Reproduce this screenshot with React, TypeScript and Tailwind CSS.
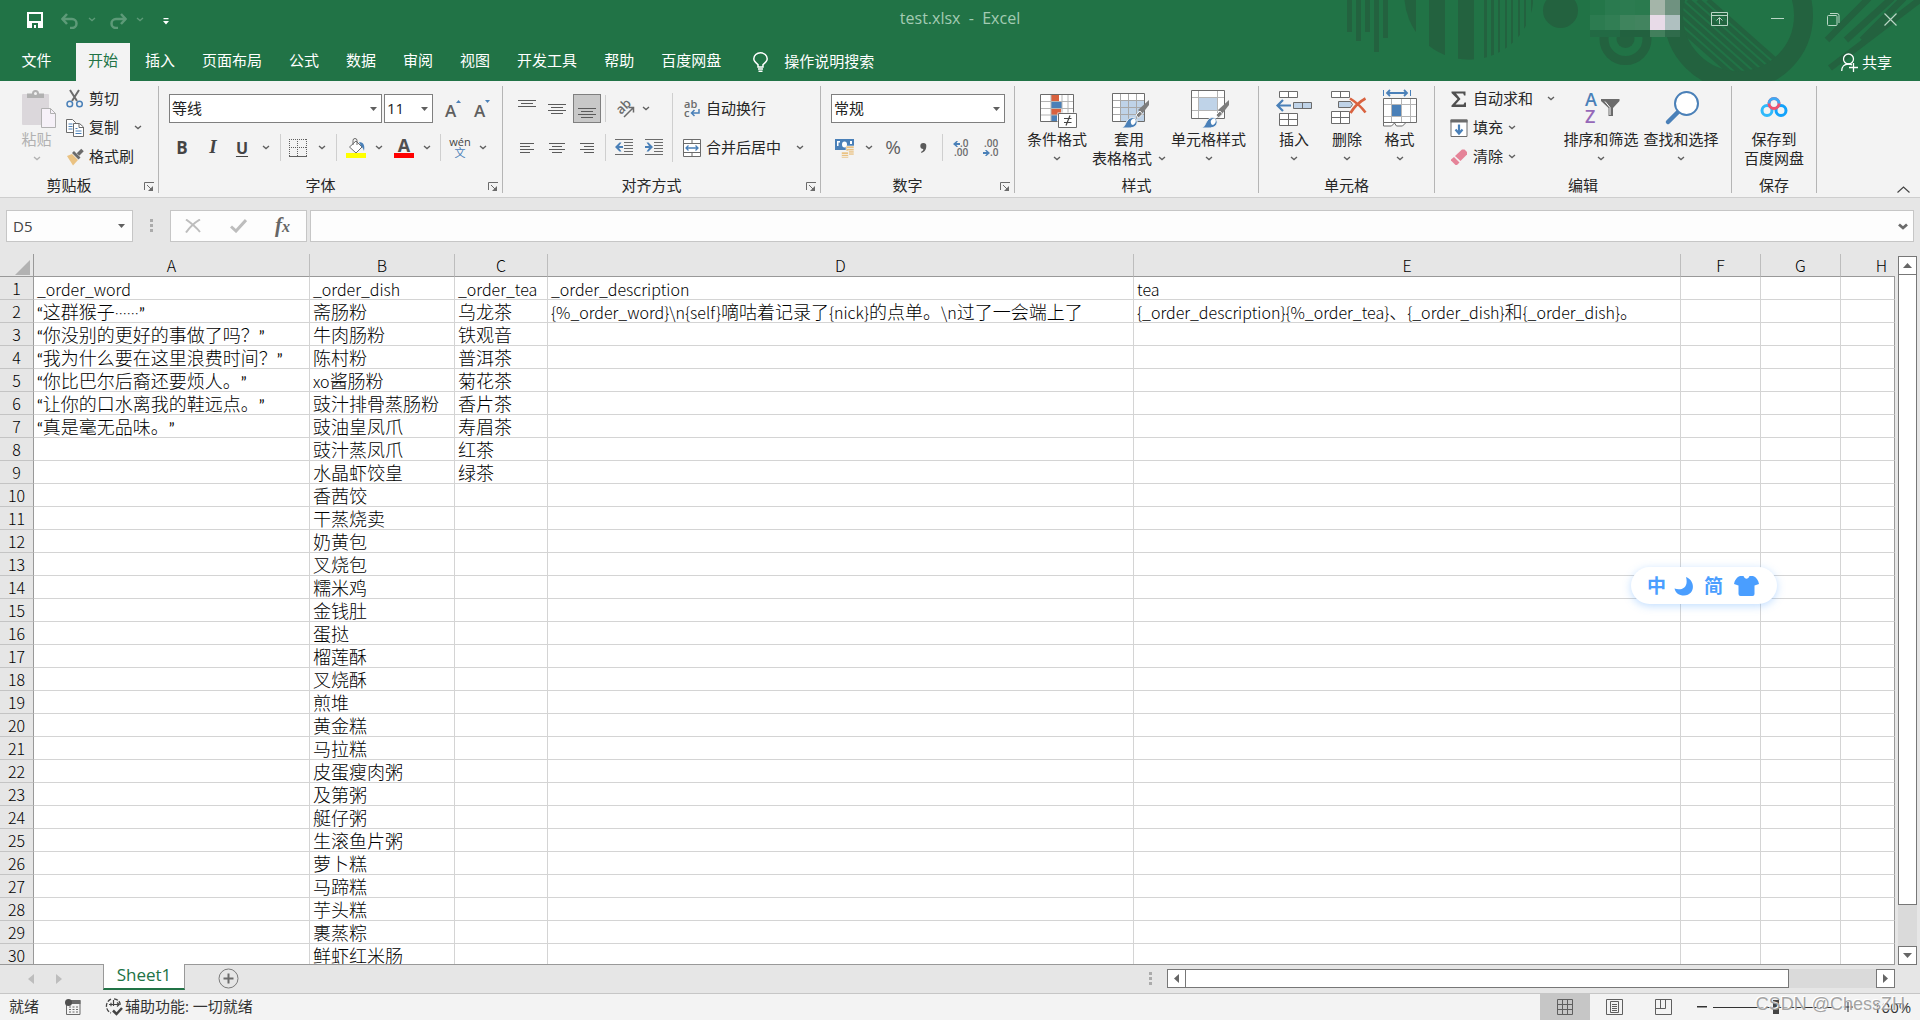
import React from "react";

type Kids = { children?: React.ReactNode };

const G = "#6b6b6b";
const B = "#4a80b8";

/* ---------- small shared pieces ---------- */

function Chev({ className = "" }: { className?: string }) {
  return (
    <svg className={"shrink-0 " + className} width="8" height="5" viewBox="0 0 8 5" fill="none" aria-hidden="true">
      <path d="M1 1l3 2.6L7 1" stroke="currentColor" strokeWidth="1.3" />
    </svg>
  );
}

function Tri({ className = "" }: { className?: string }) {
  return (
    <svg className={className} width="7" height="4" viewBox="0 0 7 4" aria-hidden="true">
      <path d="M0 0h7L3.5 4z" fill="#5f5f5f" />
    </svg>
  );
}

function Tool({ label, className = "", children }: Kids & { label: string; className?: string }) {
  return (
    <button type="button" aria-label={label} className={"flex h-[29px] shrink-0 items-center justify-center text-[#5f5f5f] " + className}>
      {children}
    </button>
  );
}

function Line({ className = "" }: { className?: string }) {
  return <div className={"h-[27px] w-px shrink-0 bg-[#cfcfcf] " + className} />;
}

function Group({ label, className, launcher, children }: Kids & { label: string; className: string; launcher?: boolean }) {
  return (
    <>
      <section aria-label={label} className={"flex shrink-0 flex-col " + className}>
        <div className="flex h-24">{children}</div>
        <div className={"relative flex h-3 items-center justify-center pb-0.5 text-[15px] leading-5 " + (launcher ? "pr-5" : "")}>
          <span>{label}</span>
          {launcher && (
            <button type="button" aria-label={label + "设置"} className="absolute right-1 top-0.5">
              <svg width="10" height="10" viewBox="0 0 10 10" fill="none">
                <path d="M.5 8V.5H10M3 3l5 5" stroke={G} />
                <path d="M9 4v5H4z" fill={G} />
              </svg>
            </button>
          )}
        </div>
      </section>
      <div className="mt-0.5 w-px shrink-0 bg-[#b5b5b5]" />
    </>
  );
}

function Big({ className, icon, label, second, noChev }: { className: string; icon: React.ReactNode; label: string; second?: string; noChev?: boolean }) {
  return (
    <button type="button" className={"flex shrink-0 flex-col items-center whitespace-nowrap pt-[5px] text-[15px] leading-[19px] " + className}>
      <svg className="shrink-0 overflow-visible" width="40" height="40" viewBox="0 0 40 40" fill="none" aria-hidden="true">
        {icon}
      </svg>
      <span className="mt-px">{label}</span>
      <span className="flex h-[19px] items-center gap-1.5">
        {second}
        {!noChev && <Chev className="text-[#5f5f5f]" />}
      </span>
    </button>
  );
}

function Small({ icon, label, chev, gap = "" }: { icon: React.ReactNode; label: string; chev?: boolean; gap?: string }) {
  return (
    <button type="button" className="flex h-[29px] items-center whitespace-nowrap text-[15px]">
      <svg className="mr-[5px] shrink-0 overflow-visible" width="18" height="18" viewBox="0 0 18 18" fill="none" aria-hidden="true">
        {icon}
      </svg>
      {label}
      {chev && <Chev className={"text-[#5f5f5f] " + gap} />}
    </button>
  );
}

function Combo({ label, value, className }: { label: string; value: string; className: string }) {
  return (
    <div className={"relative shrink-0 " + className}>
      <select aria-label={label} defaultValue={value} className="h-[29px] w-full appearance-none border border-[#7f7f7f] bg-white pl-[2px] text-[15px] leading-none text-[#222]">
        <option>{value}</option>
      </select>
      <Tri className="pointer-events-none absolute right-[5px] top-[13px]" />
    </div>
  );
}

function Lines({ rows, align = "center", wide = 18, narrow = 12, top = 0 }: { rows: number; align?: "left" | "center" | "right"; wide?: number; narrow?: number; top?: number }) {
  return (
    <svg width="18" height="18" viewBox="0 0 18 18" aria-hidden="true">
      {Array.from({ length: rows }, (_, i) => {
        const w = i % 2 ? narrow : wide;
        const x = align === "left" ? 2 : align === "right" ? 16 - w : (18 - w) / 2;
        return <rect key={i} x={x} y={top + i * 3} width={w} height="1" fill="#5a5a5a" />;
      })}
    </svg>
  );
}

const brush = (
  <>
    <path d="M40 11v5l-7 9-4-4z" fill="#7d7d7d" />
    <path d="M31 22l-4 4 2.500 3 4-4z" fill="#7d7d7d" stroke="#f3f3f3" />
    <path d="M12 39c4-1 4-4 6-7 3-5 9-4 10 0 1 5-4 7-8 7z" fill={B} stroke="#f3f3f3" />
    <path d="M22 34c-1-3 2-5 4-4 2 2 0 5-2 6-1 0-2-1-2-2z" fill="#fff" />
  </>
);

/* ---------- title bar ---------- */

const mosaic = [
  ["#247649", "#2a7a4f", "#2c7b50", "#2a7a4e", "#a4b5a9", "#6f9280"],
  ["#2c7b50", "#317e54", "#3f845d", "#42845f", "#e8dbe8", "#afc0c0"],
  ["#226a44", "#226a44", "#22613f", "#22613f", "#427f5c", "#2f6b4b"],
];

function Decor() {
  const bars = [[47, 32], [56, 41], [65, 32], [74, 52], [83, 38]];
  const slices = [[104, 12], [129, 16], [158, 16], [184, 3], [191, 3], [198, 2], [205, 2], [211, 2], [218, 2], [224, 2], [231, 2]];
  return (
    <svg className="pointer-events-none absolute right-0 top-0" width="620" height="81" viewBox="0 0 620 81" fill="#23623f" aria-hidden="true">
      <defs>
        <clipPath id="disc"><circle cx="169" cy="-5" r="64.700" /></clipPath>
        <clipPath id="hole"><circle cx="438.500" cy="15.500" r="56" /></clipPath>
      </defs>
      {bars.map(([x, h]) => <rect key={x} x={x} width="5" height={h} />)}
      <g clipPath="url(#disc)">{slices.map(([x, w]) => <rect key={x} x={x} width={w} height="62" />)}</g>
      <circle cx="260.500" cy="10.500" r="17.500" />
      <circle cx="325.500" cy="39" r="21.500" fill="none" stroke="#23623f" strokeWidth="9" />
      <circle cx="325.500" cy="39" r="9" />
      <circle cx="438.500" cy="15.500" r="65" fill="none" stroke="#23623f" strokeWidth="19" />
      <g clipPath="url(#hole)" stroke="#23623f" strokeWidth="4.500">
        {[-4, 6, 16, 26, 36, 46, 56].map((d) => <path key={d} d={`M${352 + d} 0l86 76`} />)}
      </g>
      <g stroke="#23623f" strokeWidth="6.500">
        <path d="M569-2l-42 42M592-2l-46 42M604-2l-42 42M622-2l-92 70" />
      </g>
    </svg>
  );
}

function TitleBar() {
  return (
    <div className="relative flex h-[43px] items-center text-white">
      <button type="button" aria-label="保存" className="ml-[27px] -mt-1">
        <svg width="16" height="16" viewBox="0 0 16 16" fill="none">
          <path d="M1 1h14v14H1z" stroke="#fff" strokeWidth="2" />
          <path d="M1 9h14v6H1z" fill="#fff" />
          <path d="M5 11h6v5H9v-3H7v3H5z" fill="#217346" />
        </svg>
      </button>
      <button type="button" aria-label="撤消" className="ml-[18px] -mt-0.5 text-[#5d9a78]">
        <svg width="18" height="16" viewBox="0 0 18 16" fill="none">
          <path d="M1 6h10a4.300 4.300 0 010 9H9" stroke="currentColor" strokeWidth="2.500" />
          <path d="M6 1L1.500 6 6 11" stroke="currentColor" strokeWidth="2.500" />
        </svg>
      </button>
      <Chev className="-mt-1 ml-[9px] text-[#5d9a78]" />
      <button type="button" aria-label="恢复" className="-mt-0.5 ml-[13px] text-[#5d9a78]">
        <svg width="18" height="16" viewBox="0 0 18 16" fill="none">
          <path d="M17 6H7a4.300 4.300 0 000 9h2" stroke="currentColor" strokeWidth="2.500" />
          <path d="M12 1l4.500 5L12 11" stroke="currentColor" strokeWidth="2.500" />
        </svg>
      </button>
      <Chev className="-mt-1 ml-[9px] text-[#5d9a78]" />
      <button type="button" aria-label="自定义快速访问工具栏" className="ml-[19px]">
        <svg width="6" height="7" viewBox="0 0 6 7" fill="#fff"><path d="M.5 0h5v1.200h-5zM0 3h6L3 6.500z" /></svg>
      </button>
      <h1 className="pointer-events-none absolute inset-x-0 top-2 whitespace-pre text-center text-[16px] leading-5 text-[#a3cbb3]">test.xlsx  -  Excel</h1>
      <div className="ml-auto flex h-full text-[#b9d6c5]">
        <div className="mr-[31px] grid h-[37px] grid-cols-[repeat(6,15px)] grid-rows-[15px_15px_7px]">
          {mosaic.flat().map((c, i) => <div key={i} style={{ background: c }} />)}
        </div>
        <button type="button" aria-label="功能区显示选项" className="flex h-[38px] w-[18px] items-center">
          <svg width="17" height="14" viewBox="0 0 17 14" fill="none" stroke="currentColor"><path d="M.5.5h16v13H.5zM.5 3.500h16M8.500 12V6M5.500 8.500l3-3 3 3" /></svg>
        </button>
        <button type="button" aria-label="最小化" className="ml-[42px] flex h-[36px] w-[13px] items-center">
          <svg width="13" height="1" viewBox="0 0 13 1"><path d="M0 0h13v1H0z" fill="currentColor" /></svg>
        </button>
        <button type="button" aria-label="还原" className="ml-[43px] flex h-[38px] w-[14px] items-center">
          <svg width="13" height="13" viewBox="0 0 13 13" fill="none" stroke="currentColor"><rect x=".5" y="2.500" width="9.500" height="10" rx="1" /><path d="M3 .5h7a2 2 0 012 2V10" /></svg>
        </button>
        <button type="button" aria-label="关闭" className="ml-[43px] mr-[23px] flex h-[38px] w-[13px] items-center">
          <svg width="13" height="13" viewBox="0 0 13 13" fill="none" stroke="currentColor" strokeWidth="1.200"><path d="M.5.5l12 12M12.500.5l-12 12" /></svg>
        </button>
      </div>
    </div>
  );
}

function TabBar() {
  const tabs = ["插入", "页面布局", "公式", "数据", "审阅", "视图", "开发工具", "帮助", "百度网盘"];
  return (
    <div className="relative flex h-[38px] items-stretch text-[15px] text-white">
      <button type="button" className="w-[76px] pb-[3px] pr-[3px]">文件</button>
      <button type="button" className="mr-[2px] bg-[#f3f3f3] px-[12px] pb-[3px] text-[#217346]">开始</button>
      {tabs.map((t) => <button type="button" key={t} className="mr-px px-[13px] pb-[3px]">{t}</button>)}
      <button type="button" className="ml-[18px] flex items-center gap-4">
        <svg width="15" height="20" viewBox="0 0 15 20" fill="none" stroke="#fff" strokeWidth="1.500"><path d="M5 15v-2.500C3 11 .8 9.500.8 6.800a6.700 6 0 0113.400 0c0 2.700-2.200 4.200-4.200 5.700V15zM5 17h5M5.500 19.200h4" /></svg>
        <span className="pb-[2px]">操作说明搜索</span>
      </button>
      <button type="button" className="ml-auto mr-[28px] flex items-center gap-1">
        <svg width="17" height="19" viewBox="0 0 17 19" fill="none" stroke="#fff" strokeWidth="1.300"><circle cx="7.500" cy="6" r="5" /><path d="M.7 18c0-4 2.500-7 6.800-7 1.500 0 2.500.3 3.500 1M8 14.500h9M12.500 10v9" /></svg>
        共享
      </button>
    </div>
  );
}

/* ---------- ribbon ---------- */

function Ribbon() {
  return (
    <div className="relative flex h-[117px] shrink-0 items-stretch border-b border-[#cecece] bg-[#f3f3f3] pb-1 pt-[3px] text-[#262626]">
      <Group label="剪贴板" className="w-[158px]" launcher>
        <button type="button" className="ml-[15px] flex w-[43px] flex-col items-center whitespace-nowrap pt-[5px] text-[15px] leading-[19px] text-[#b1b1b1]">
          <svg className="ml-[5px] shrink-0" width="36" height="40" viewBox="0 0 36 40" fill="none" aria-hidden="true">
            <rect x="1" y="5" width="27" height="31" rx="1" fill="#dbd7db" />
            <path d="M6 9V4.500h5a3.500 3.500 0 017 0h5V9z" fill="#b1b1b1" />
            <circle cx="14.500" cy="4.500" r="1.500" fill="#f3f3f3" />
            <path d="M20.500 19.500h9l5 5v14h-14z" fill="#f6f1f8" stroke="#b1b1b1" />
            <path d="M29.500 19.500v5h5" stroke="#b1b1b1" />
          </svg>
          <span className="mt-px">粘贴</span>
          <span className="flex h-[19px] items-center"><Chev /></span>
        </button>
        <div className="ml-[8px] flex flex-col items-start">
          <Small label="剪切" icon={<><path d="M4 0l7 11M13 0L6 11" stroke="#6b6b6b" strokeWidth="2" /><circle cx="3.800" cy="14" r="2.800" stroke={B} strokeWidth="1.500" /><circle cx="13.500" cy="14" r="2.800" stroke={B} strokeWidth="1.500" /></>} />
          <Small label="复制" chev gap="ml-[15px]" icon={<><path d="M.5.500h6l3 3v10h-9z" fill="#fff" stroke={G} /><path d="M2.500 5h4M2.500 7.500h4M2.500 10h4" stroke={B} /><path d="M7.500 4.500h6l4 3.500v9.500h-10z" fill="#fff" stroke={G} /><path d="M13 5v3.500h4" stroke={G} /><path d="M9.500 9.500h2M9.500 12h6M9.500 14.500h6" stroke={B} /></>} />
          <Small label="格式刷" icon={<><path d="M1 8l5-2 6 6-5 5.500z" fill="#eac282" /><path d="M6 5l2-2 6.500 6.500-2 2z" fill="#6b6b6b" /><path d="M12 6.500l4.500-4.500" stroke="#6b6b6b" strokeWidth="3.500" /></>} />
        </div>
      </Group>

      <Group label="字体" className="w-[343px]" launcher>
        <div className="flex flex-col pl-[10px] pt-[10px]">
          <div className="flex">
            <Combo label="字体" value="等线" className="w-[213px]" />
            <Combo label="字号" value="11" className="ml-[2px] w-[49px]" />
            <Tool label="增大字号" className="ml-[9px] w-[22px]">
              <span className="mt-1 text-[17px] font-semibold leading-6">A</span>
              <svg className="mb-3.5 shrink-0" width="5" height="3" viewBox="0 0 5 3"><path d="M2.500 0L5 3H0z" fill={B} /></svg>
            </Tool>
            <Tool label="减小字号" className="ml-[7px] w-[22px]">
              <span className="mt-1 text-[17px] font-semibold leading-6">A</span>
              <svg className="mb-3.5 shrink-0" width="5" height="3" viewBox="0 0 5 3"><path d="M2.500 3L5 0H0z" fill={B} /></svg>
            </Tool>
          </div>
          <div className="-ml-[2px] mt-[10px] flex items-center">
            <Tool label="加粗" className="w-[30px] text-[17px] font-bold text-[#444]">B</Tool>
            <Tool label="倾斜" className="w-[32px] font-['Liberation_Serif',serif] text-[19px] font-bold italic text-[#444]">I</Tool>
            <Tool label="下划线" className="w-[26px] text-[16px] font-bold text-[#444] underline underline-offset-2">U</Tool>
            <Tool label="下划线样式" className="w-[22px]"><Chev /></Tool>
            <Line className="ml-[3px] mr-[3px]" />
            <Tool label="边框" className="w-[28px]">
              <svg width="18" height="18" viewBox="0 0 18 18" fill="none" stroke="#5f5f5f"><path d="M.5 0v17M8.500 0v17M17.500 0v17M0 .5h18M0 8.500h18" strokeDasharray="1 1" /><path d="M0 17.500h18" /></svg>
            </Tool>
            <Tool label="边框样式" className="w-[20px]"><Chev /></Tool>
            <Line className="ml-[4px] mr-[4px]" />
            <Tool label="填充颜色" className="w-[30px]">
              <svg width="20" height="20" viewBox="0 0 20 20" fill="none"><path d="M3.500 9L10 3l6 6-6 6z" fill="#fff" stroke={G} /><path d="M7 7V2.500a2 2 0 014 0V7" stroke={G} /><path d="M13 4c5 0 6 4 5 9-1-3-2-4-3-5z" fill={B} /><rect y="15" width="20" height="5" fill="#ff0" /></svg>
            </Tool>
            <Tool label="填充颜色选项" className="w-[16px]"><Chev /></Tool>
            <Tool label="字体颜色" className="ml-[2px] w-[30px] flex-col">
              <span className="mt-px text-[18px] font-bold leading-[15px] text-[#505050]">A</span>
              <span className="h-[5px] w-5 bg-[#f00]" />
            </Tool>
            <Tool label="字体颜色选项" className="w-[16px]"><Chev /></Tool>
            <Line className="ml-[5px] mr-[6px]" />
            <Tool label="拼音" className="w-[26px] flex-col">
              <span className="text-[11px] leading-[10px] text-[#444]">wén</span>
              <span className="text-[11px] leading-[12px] text-[#4a80b8]">文</span>
            </Tool>
            <Tool label="拼音选项" className="w-[20px]"><Chev /></Tool>
          </div>
        </div>
      </Group>

      <Group label="对齐方式" className="w-[317px]" launcher>
        <div className="flex flex-col pl-[10px] pt-[10px]">
          <div className="flex items-center">
            <Tool label="顶端对齐" className="w-[28px]"><Lines rows={3} /></Tool>
            <Tool label="垂直居中" className="ml-[2px] w-[28px]"><Lines rows={4} top={4} /></Tool>
            <Tool label="底端对齐" className="ml-[2px] w-[28px] border border-[#7f7f7f] bg-[#c8c8c8]"><Lines rows={4} top={8} /></Tool>
            <Line className="ml-[4px]" />
            <Tool label="方向" className="ml-[6px] w-[26px]">
              <svg className="overflow-visible" width="22" height="20" viewBox="0 0 22 20" fill="none"><text fontSize="13" fontWeight="600" fill={G} transform="translate(7 16) rotate(-45)">ab</text><path d="M10 18L19 9M14.500 8.500h5v5" stroke={G} strokeWidth="1.500" /></svg>
            </Tool>
            <Tool label="方向选项" className="w-[16px]"><Chev /></Tool>
          </div>
          <div className="mt-[10px] flex items-center">
            <Tool label="左对齐" className="w-[28px]"><Lines rows={4} top={4} align="left" wide={14} narrow={10} /></Tool>
            <Tool label="居中" className="ml-[2px] w-[28px]"><Lines rows={4} top={4} wide={16} narrow={10} /></Tool>
            <Tool label="右对齐" className="ml-[2px] w-[28px]"><Lines rows={4} top={4} align="right" wide={14} narrow={10} /></Tool>
            <Line className="ml-[4px]" />
            <Tool label="减少缩进量" className="ml-[6px] w-[24px]">
              <svg width="18" height="17" viewBox="0 0 18 17" fill="none"><path d="M0 .5h18M9 3.500h9M9 6.500h9M9 9.500h9M9 12.500h9M0 15.500h18" stroke={G} /><path d="M0 8l4.500-4.500h2L4 7h4v2H4l2.500 3.500h-2z" fill={B} /></svg>
            </Tool>
            <Tool label="增加缩进量" className="ml-[6px] w-[24px]">
              <svg width="18" height="17" viewBox="0 0 18 17" fill="none"><path d="M0 .5h18M9 3.500h9M9 6.500h9M9 9.500h9M9 12.500h9M0 15.500h18" stroke={G} /><path d="M8 8L3.500 3.500h-2L4 7H0v2h4l-2.500 3.500h2z" fill={B} /></svg>
            </Tool>
          </div>
        </div>
        <div className="ml-[6px] mt-[9px] h-[69px] w-px bg-[#cfcfcf]" />
        <div className="flex flex-col items-start gap-[10px] pl-[10px] pt-[10px]">
          <Small label="自动换行" icon={<><text x="1" y="8" fontSize="11" fontWeight="600" fill={G}>ab</text><text x="1" y="17" fontSize="11" fontWeight="600" fill={G}>c</text><path d="M16 9v4H9M11.500 10L8.500 13l3 3" stroke={B} strokeWidth="1.500" /></>} />
          <Small label="合并后居中" chev gap="ml-[15px]" icon={<><path d="M.5.500h17v17H.5zM.5 4.500h17M.5 13.500h17M9 .5v4M9 13.500v4" fill="#fff" stroke={G} /><path d="M3 9h12M5.500 6.500L3 9l2.500 2.500M12.500 6.500L15 9l-2.500 2.500" stroke={B} strokeWidth="1.300" /></>} />
        </div>
      </Group>

      <Group label="数字" className="w-[193px]" launcher>
        <div className="flex flex-col pl-[10px] pt-[10px]">
          <Combo label="数字格式" value="常规" className="w-[174px]" />
          <div className="mt-[10px] flex items-center">
            <Tool label="会计数字格式" className="w-[28px]">
              <svg width="20" height="20" viewBox="0 0 20 20" fill="none"><rect width="19" height="11" fill={B} y="1" /><path d="M2 3h3v1.500H3.500V8H2zM17 3v3h-2V3zM9.500 3.500a2.500 3 0 010 6 2.500 3 0 010-6z" fill="#fff" /><path d="M6.500 14h7v6h-7zM11 8h8v9h-5.500v-4H11z" fill="#eac282" stroke="#f3f3f3" strokeWidth=".6" /><path d="M6.500 16.500h7M6.500 18.500h7M12 10.500h7M13 12.800h6M13.500 15h6" stroke="#f3f3f3" strokeWidth=".8" /></svg>
            </Tool>
            <Tool label="会计数字格式选项" className="w-[20px]"><Chev /></Tool>
            <Tool label="百分比样式" className="w-[28px] text-[19px]">%</Tool>
            <Tool label="千位分隔样式" className="ml-[2px] w-[28px]">
              <svg width="7" height="10" viewBox="0 0 7 10"><path d="M3.300 0a3 3 0 013 3.300C6.300 7 4 9.200 1.500 10l-.5-1c1.500-.8 2.300-1.800 2.300-3A3 3 0 013.300 0z" fill="#5a5a5a" /></svg>
            </Tool>
            <Line className="ml-[5px]" />
            <Tool label="增加小数位数" className="ml-[5px] w-[26px]">
              <svg className="overflow-visible" width="18" height="18" viewBox="0 0 18 18"><text x="8" y="8" fontSize="10" fontWeight="600" fill={G}>.0</text><text x="2" y="17" fontSize="10" fontWeight="600" fill={G}>.00</text><path d="M1 5l3.500-3h1.500L4.500 4H8v2H4.500L6 8H4.500z" fill={B} /></svg>
            </Tool>
            <Tool label="减少小数位数" className="ml-[4px] w-[26px]">
              <svg className="overflow-visible" width="18" height="18" viewBox="0 0 18 18"><text x="2" y="8" fontSize="10" fontWeight="600" fill={G}>.00</text><text x="8" y="17" fontSize="10" fontWeight="600" fill={G}>.0</text><path d="M8 14l-3.500-3H3l1.500 2H1v2h3.500L3 17h1.500z" fill={B} /></svg>
            </Tool>
          </div>
        </div>
      </Group>

      <Group label="样式" className="w-[243px]">
        <Big className="w-[84px]" label="条件格式" icon={<><path d="M3.500 5.500h33v27h-33z" fill="#fff" /><path d="M14 6h8v6h-8zM14 20h10v6H14z" fill="#d9623f" /><path d="M14 12.500h11v6.500H14zM14 26h6v6h-6z" fill={B} /><path d="M14 5v27M25 5v27M31 5v27M4 12.500h33M4 19.500h33M4 26h33" stroke="#b5b5b5" /><path d="M3.500 5.500h33v27h-33z" stroke={G} /><path d="M20.500 23.500h20v16h-20z" fill="#f3f3f3" /><path d="M21.500 24.500h18v14h-18z" fill="#fff" stroke={G} /><path d="M27 29.500h7.500M27 33.500h7.500M33 26.500l-4 10" stroke="#444" strokeWidth="1.200" /></>} />
        <Big className="w-[60px]" label="套用" second="表格格式" icon={<><path d="M3.500 4.500h32v28h-32z" fill="#fff" /><path d="M11.500 11.500h24v21h-24z" fill="#bfd3e8" /><path d="M11.500 5v28M19.500 5v28M27.500 5v28M4 11.500h32M4 18.500h32M4 25.500h32" stroke="#a8a8a8" /><path d="M3.500 4.500h32v28h-32z" stroke={G} />{brush}</>} />
        <Big className="w-[99px]" label="单元格样式" icon={<><path d="M2.500 1.500h33v28h-33z" fill="#fff" /><path d="M9.500 8.500h19v13h-19z" fill="#bfd3e8" /><path d="M9.500 2v28M28.500 2v28M3 8.500h33M3 21.500h33" stroke="#b5b5b5" /><path d="M2.500 1.500h33v28h-33z" stroke={G} />{brush}</>} />
      </Group>

      <Group label="单元格" className="w-[175px]">
        <Big className="w-[70px]" label="插入" icon={<><path d="M5.500 2.500h18v6h-18zM14.500 2.500v6M5.500 24.500h18v12h-18zM14.500 24.500v12M5.500 30.500h18" fill="#fff" stroke={G} /><path d="M19.500 13.500h18v6h-18zM28.500 13.500v6" fill="#bfd3e8" stroke={G} /><path d="M3 16.500h14M9 11l-5.500 5.500L9 22" stroke={B} strokeWidth="2.200" /></>} />
        <Big className="w-[36px]" label="删除" icon={<><path d="M4.500 2.500h18v6h-18zM13.500 2.500v6M4.500 22.500h18v12h-18zM13.500 22.500v12M4.500 28.500h18" fill="#fff" stroke={G} /><path d="M11.500 12.500h12l2 3-2 3h-12z" fill="#bfd3e8" stroke={G} /><path d="M23 9.500c5 3 11 8 15.500 14M38.500 9.500C32 13 27 18 23.500 24" stroke="#d9623f" strokeWidth="2.600" /></>} />
        <Big className="w-[69px]" label="格式" icon={<><path d="M3.500 1v6M30.500 1v6" stroke={B} /><path d="M7 4h20M10 1L7 4l3 3M24 1l3 3-3 3" stroke={B} strokeWidth="1.800" /><path d="M3.500 33v4h8l3-3 2 3h6l4-4" fill="#fff" stroke={G} /><path d="M3.500 9.500h33v24h-33z" fill="#fff" /><path d="M11.500 10v24M21.500 10v24M30.500 10v24M4 15.500h33M4 27.500h33" stroke="#b5b5b5" /><path d="M12 16h9v11h-9z" fill={B} /><path d="M3.500 9.500h33v24h-33z" stroke={G} /></>} />
      </Group>

      <Group label="编辑" className="w-[296px]">
        <div className="ml-[15px] flex w-[111px] flex-col items-start">
          <Small label="自动求和" chev gap="ml-[14px]" icon={<path d="M1.500 1.500h14v4h-1.500l-.8-2H6L10.500 9 5.500 14.500h8l1-2H16V17H1.500v-1.500L7.500 9l-6-6z" fill="#505050" />} />
          <Small label="填充" chev gap="ml-[5px]" icon={<><path d="M1 1h16v16.500H1z" fill="#fff" stroke={G} /><path d="M.5.500h17v3H.5z" fill={G} /><path d="M9 5.500v9M5.500 10.500L9 14.500l3.500-4" stroke={B} strokeWidth="2.200" /></>} />
          <Small label="清除" chev gap="ml-[5px]" icon={<><path d="M5 8l7-6.500h2.500L17 4v2.500L10.500 13z" fill="#e58398" /><path d="M4 9l5.500 5.500L7 17H5.500L1 12.500V11.500z" fill="#e58398" /></>} />
        </div>
        <Big className="w-[80px]" label="排序和筛选" icon={<><text x="4" y="17" fontSize="18" fontWeight="600" fill={B}>A</text><text x="4" y="34" fontSize="18" fontWeight="600" fill="#9668b8">Z</text><path d="M20 10h18.500v2L32 19v8h-4.500v-8L20 12z" fill={G} /><path d="M24 12.500l5 6V26" stroke="#fff" /></>} />
        <Big className="w-[80px]" label="查找和选择" icon={<><path d="M7 33l10-10" stroke={B} strokeWidth="4.500" strokeLinecap="round" /><circle cx="25.500" cy="14.500" r="11.500" fill="#fff" stroke={B} strokeWidth="2" /></>} />
      </Group>

      <Group label="保存" className="w-[84px]">
        <Big className="w-[84px]" label="保存到" second="百度网盘" noChev icon={<><circle cx="13" cy="21.500" r="5" stroke="#2fb9fb" strokeWidth="3" /><circle cx="27" cy="21.500" r="5" stroke="#12a2fb" strokeWidth="3" /><circle cx="20" cy="14.500" r="5" stroke="#f2506e" strokeWidth="3" /><path d="M15 14.500a5 5 0 0110 0" stroke="#3fa9f5" strokeWidth="3" /></>} />
      </Group>

      <button type="button" aria-label="折叠功能区" className="ml-auto mr-[10px] self-end">
        <svg width="13" height="7" viewBox="0 0 13 7" fill="none"><path d="M.5 6.500l6-5.500 6 5.500" stroke="#444" strokeWidth="1.200" /></svg>
      </button>
    </div>
  );
}

/* ---------- formula bar ---------- */

function Dots({ className = "" }: { className?: string }) {
  return (
    <svg className={"shrink-0 " + className} width="3" height="13" viewBox="0 0 3 13" fill="#ababab" aria-hidden="true">
      <path d="M0 0h3v3H0zM0 5h3v3H0zM0 10h3v3H0z" />
    </svg>
  );
}

function FormulaBar() {
  return (
    <div className="flex h-14 shrink-0 items-start pl-[6px] pr-[6px] pt-3">
      <div className="flex h-8 w-[127px] shrink-0 items-center border border-[#c6c6c6] bg-[#fdfdfd]">
        <input aria-label="名称框" defaultValue="D5" className="w-full min-w-0 bg-transparent pl-[6px] text-[15px] text-[#444]" />
        <button type="button" aria-label="名称列表" className="mr-[7px]"><Tri /></button>
      </div>
      <Dots className="ml-[17px] mt-[9px]" />
      <div className="ml-[17px] flex h-8 w-[137px] shrink-0 items-center border border-[#c6c6c6] bg-[#fdfdfd]">
        <button type="button" aria-label="取消" className="ml-[14px]">
          <svg width="16" height="14" viewBox="0 0 16 14" fill="none" stroke="#bdbdbd" strokeWidth="2"><path d="M1 .5C6 4 11 8 15 13M15 .5C9 4 5 8 1 13.500" /></svg>
        </button>
        <button type="button" aria-label="输入" className="ml-[29px]">
          <svg width="17" height="14" viewBox="0 0 17 14" fill="none" stroke="#bdbdbd" strokeWidth="3"><path d="M1 7.500l5 4.500L16 1" /></svg>
        </button>
        <button type="button" aria-label="插入函数" className="ml-[28px] whitespace-nowrap font-['Liberation_Serif',serif] text-[21px] font-bold italic leading-6 text-[#666]">
          f<span className="text-[16px]">x</span>
        </button>
      </div>
      <div className="ml-[3px] flex h-8 flex-1 items-center border border-[#c6c6c6] bg-[#fdfdfd]">
        <input aria-label="编辑栏" className="h-full min-w-0 flex-1 bg-transparent px-2 text-[15px]" />
        <button type="button" aria-label="展开编辑栏" className="mr-[5px]">
          <svg width="10" height="7" viewBox="0 0 10 7" fill="none"><path d="M1 1.500l4 3.500 4-3.500" stroke="#6b6b6b" strokeWidth="2.800" /></svg>
        </button>
      </div>
    </div>
  );
}

/* ---------- sheet ---------- */

const colA = ["_order_word", "“这群猴子……”", "“你没别的更好的事做了吗？”", "“我为什么要在这里浪费时间？”", "“你比巴尔后裔还要烦人。”", "“让你的口水离我的鞋远点。”", "“真是毫无品味。”"];
const colB = ["_order_dish", "斋肠粉", "牛肉肠粉", "陈村粉", "xo酱肠粉", "豉汁排骨蒸肠粉", "豉油皇凤爪", "豉汁蒸凤爪", "水晶虾饺皇", "香茜饺", "干蒸烧卖", "奶黄包", "叉烧包", "糯米鸡", "金钱肚", "蛋挞", "榴莲酥", "叉烧酥", "煎堆", "黄金糕", "马拉糕", "皮蛋瘦肉粥", "及第粥", "艇仔粥", "生滚鱼片粥", "萝卜糕", "马蹄糕", "芋头糕", "裹蒸粽", "鲜虾红米肠"];
const colC = ["_order_tea", "乌龙茶", "铁观音", "普洱茶", "菊花茶", "香片茶", "寿眉茶", "红茶", "绿茶"];
const colD = ["_order_description", "{%_order_word}\\n{self}嘀咕着记录了{nick}的点单。\\n过了一会端上了"];
const colE = ["tea", "{_order_description}{%_order_tea}、{_order_dish}和{_order_dish}。"];
const columns = [colA, colB, colC, colD, colE, [], [], []];

/* Latin runs, quotes and ellipses are set in their own sizes beside the Chinese text. */
function CellText({ text }: { text: string }) {
  return (
    <>
      {text.split(/([\x20-\x7e]+|[“”]|…+)/).filter(Boolean).map((part, i) => {
        if (/^[\x20-\x7e]/.test(part)) return <span key={i} className="text-[16px] leading-4">{part}</span>;
        if (/^[“”]/.test(part)) return <span key={i} className="font-['Lato',sans-serif] text-[16px] font-normal leading-4">{part}</span>;
        if (part[0] === "…") return <span key={i} className="text-[12px] leading-3">{part}</span>;
        return part;
      })}
    </>
  );
}

function ScrollButton({ label, d, className = "" }: { label: string; d: string; className?: string }) {
  return (
    <button type="button" aria-label={label} className={"flex h-[19px] w-[19px] shrink-0 items-center justify-center border border-[#777] bg-white " + className}>
      <svg width="9" height="9" viewBox="0 0 9 9"><path d={d} fill="#666" /></svg>
    </button>
  );
}

function Sheet() {
  return (
    <div className="flex min-h-0 flex-1">
      <div className="min-w-0 flex-1 overflow-hidden border-b border-[#999]">
        <table className="w-full table-fixed border-separate border-spacing-0 font-['Noto_Sans_CJK_SC',sans-serif] text-[18px] font-light leading-[22px] text-black [text-spacing-trim:space-all]">
          <colgroup>
            <col className="w-[34px]" />
            <col className="w-[276px]" />
            <col className="w-[145px]" />
            <col className="w-[93px]" />
            <col className="w-[586px]" />
            <col className="w-[547px]" />
            <col className="w-[80px]" />
            <col className="w-[80px]" />
            <col />
          </colgroup>
          <thead>
            <tr className="h-[23px]">
              <th className="h-[23px] border-b border-r border-[#999] p-0">
                <svg className="ml-auto mr-[3px] mt-1" width="15" height="15" viewBox="0 0 15 15"><path d="M15 0v15H0z" fill="#b2b2b2" /></svg>
              </th>
              {"ABCDEFGH".split("").map((c) => (
                <th key={c} scope="col" className={"h-[23px] border-b border-b-[#999] p-0 pt-px text-center text-[16px] font-light leading-[21px] " + (c === "H" ? "pl-[27px]" : "border-r border-r-[#bdbdbd]")}>{c}</th>
              ))}
            </tr>
          </thead>
          <tbody>
            {colB.map((_, r) => (
              <tr key={r} className="h-[23px]">
                <th scope="row" className="h-[23px] border-b border-r border-b-[#c4c4c4] border-r-[#999] p-0 pt-px text-center text-[16px] font-light leading-[21px]">{r + 1}</th>
                {columns.map((col, c) => (
                  <td key={c} className={"h-[23px] whitespace-nowrap border-b border-r border-b-[#d4d4d4] bg-white py-0 pl-[3px] pr-0 " + (c === 7 ? "border-r-[#999]" : "border-r-[#d4d4d4]")}>
                    {col[r] && <CellText text={col[r]} />}
                  </td>
                ))}
              </tr>
            ))}
          </tbody>
        </table>
      </div>
      <div className="flex w-[25px] shrink-0 flex-col pl-[3px] pt-[2px]">
        <ScrollButton label="向上滚动" d="M4.500 2L9 7H0z" />
        <div className="flex w-[19px] flex-1 flex-col bg-[#dadada]">
          <div className="-mt-px h-[94%] border border-[#777] bg-white" />
        </div>
        <ScrollButton label="向下滚动" d="M4.500 7L9 2H0z" />
      </div>
    </div>
  );
}

function SheetTabs() {
  return (
    <div className="flex h-[28px] shrink-0 items-start">
      <button type="button" aria-label="上一张工作表" className="ml-[28px] mt-[9px]"><svg width="6" height="10" viewBox="0 0 6 10"><path d="M6 0v10L0 5z" fill="#bdbdbd" /></svg></button>
      <button type="button" aria-label="下一张工作表" className="ml-[22px] mt-[9px]"><svg width="6" height="10" viewBox="0 0 6 10"><path d="M0 0v10l6-5z" fill="#bdbdbd" /></svg></button>
      <button type="button" className="relative -mt-px ml-[41px] h-[26px] w-[82px] border-x border-b-2 border-x-[#999] border-b-[#217346] bg-white pb-0.5 text-[17px] leading-[22px] text-[#217346]">Sheet1</button>
      <button type="button" aria-label="新工作表" className="ml-[33px] mt-[3px]">
        <svg width="21" height="21" viewBox="0 0 21 21" fill="none"><circle cx="10.500" cy="10.500" r="9.500" stroke="#7b7b7b" /><path d="M10.500 5.500v10M5.500 10.500h10" stroke="#6b6b6b" strokeWidth="2" /></svg>
      </button>
      <div className="ml-auto flex w-[771px] items-start">
        <Dots className="mt-[7px]" />
        <div className="ml-[15px] mr-[25px] mt-[4px] flex h-[19px] flex-1 bg-[#dadada]">
          <ScrollButton label="向左滚动" d="M2 4.500L7 0v9z" />
          <div className="-ml-px w-[604px] border border-[#777] bg-white" />
          <ScrollButton label="向右滚动" d="M7 4.500L2 0v9z" className="ml-auto" />
        </div>
      </div>
    </div>
  );
}

function StatusBar() {
  return (
    <div className="relative flex h-[27px] shrink-0 items-stretch border-t border-[#c6c6c6] bg-[#f3f3f3] text-[15px] text-[#333]">
      <span className="ml-[9px] self-center pb-0.5 leading-5">就绪</span>
      <svg className="ml-[26px] self-center" width="16" height="16" viewBox="0 0 16 16" fill="none" aria-hidden="true">
        <path d="M1.500 4v11.500h13.500V1.500H6" stroke={G} /><path d="M6 1h9.500v4H6z" fill={G} /><circle cx="3.500" cy="3.500" r="3.500" fill="#505050" />
        <path d="M4 8h2M7.500 8h2M11 8h2M4 10.500h2M7.500 10.500h2M11 10.500h2M4 13h2M7.500 13h2M11 13h2" stroke={G} />
      </svg>
      <button type="button" className="ml-[23px] flex items-center gap-0.5 leading-5">
        <svg width="19" height="18" viewBox="0 0 19 18" fill="none" stroke="#444" aria-hidden="true">
          <path d="M10 .8c4 .5 6 3 6.300 6M7 1.200A7.500 7.500 0 007 15" strokeWidth="1.300" strokeDasharray="4 1.500" /><path d="M5 6.500h4M7 4.700v3.600M9 6.500h6M13 4.500l2.200 2-2.200 2M9.500 2v6" strokeWidth="1.200" /><path d="M9 12.500l3.500 3.500 5.500-6" strokeWidth="2.500" />
        </svg>
        <span className="pb-0.5">辅助功能: 一切就绪</span>
      </button>
      <button type="button" aria-label="普通" className="ml-auto flex w-[50px] items-center justify-center bg-[#c6c6c6]">
        <svg width="16" height="16" viewBox="0 0 16 16" fill="none" stroke="#5f5f5f"><path d="M.5.5h15v15H.5zM.5 5.500h15M.5 10.500h15M5.500 0v16M10.500 0v16" /></svg>
      </button>
      <button type="button" aria-label="页面布局" className="flex w-[49px] items-center justify-center">
        <svg width="17" height="16" viewBox="0 0 17 16" fill="none" stroke="#5f5f5f"><path d="M.5.5h16v15H.5zM4.500 2.500h8v11h-8zM6 5.500h5M6 7.500h5M6 9.500h5M6 11.500h5" /></svg>
      </button>
      <button type="button" aria-label="分页预览" className="flex w-[49px] items-center justify-center">
        <svg width="17" height="16" viewBox="0 0 17 16" fill="none" stroke="#5f5f5f"><path d="M.5.5h16v15H.5zM.5 9.500h10V.5M5.500.5v9" /></svg>
      </button>
      <button type="button" aria-label="缩小" className="ml-[9px] self-center"><svg width="10" height="2" viewBox="0 0 10 2"><path d="M0 0h10v1.500H0z" fill="#333" /></svg></button>
      <input type="range" aria-label="显示比例" defaultValue="53" className="ml-[6px] h-[14px] w-[119px] appearance-none self-center bg-[linear-gradient(#333,#333)] bg-[length:100%_1px] bg-center bg-no-repeat [&::-webkit-slider-thumb]:h-[14px] [&::-webkit-slider-thumb]:w-[6px] [&::-webkit-slider-thumb]:appearance-none [&::-webkit-slider-thumb]:bg-[#444]" />
      <button type="button" aria-label="放大" className="ml-[11px] self-center"><svg width="10" height="10" viewBox="0 0 10 10"><path d="M0 4.500h10v1H0zM4.500 0h1v10h-1z" fill="#333" /></svg></button>
      <span className="ml-[20px] mr-[10px] w-[37px] self-center whitespace-nowrap leading-5">100%</span>
      <span className="pointer-events-none absolute bottom-[6px] right-[15px] whitespace-nowrap font-['Liberation_Sans',sans-serif] text-[18px] leading-5 text-[#999]/90 [text-shadow:-1px_-1px_0_#fff]">CSDN @ChessZH</span>
    </div>
  );
}

function ImeBar() {
  return (
    <div className="absolute right-[143px] top-[567px] flex h-[37px] items-center rounded-full bg-white pl-4 pr-[18px] font-['Noto_Sans_CJK_SC',sans-serif] text-[19px] font-bold leading-6 text-[#4a9eff] shadow-[0_2px_8px_rgba(74,158,255,0.35)]">
      <span className="pb-0.5">中</span>
      <svg className="ml-[8px]" width="20" height="20" viewBox="0 0 20 20"><path d="M12 1c10 4 9 18-2 18.500C5 19.500 1.500 17 .5 12.500 7 15 15 12 12 1z" fill="#4a9eff" /></svg>
      <span className="ml-[10px] pb-0.5">简</span>
      <svg className="ml-[11px]" width="25" height="20" viewBox="0 0 25 20"><path d="M6 0h3.500c1.500 3.500 4.500 3.500 6 0H19c3 1 5.500 4 6 8l-4.500 1.500V18a2 2 0 01-2 2h-12a2 2 0 01-2-2V9.500L0 8c.5-4 3-7 6-8z" fill="#4a9eff" /></svg>
    </div>
  );
}

export default function App() {
  return (
    <div lang="zh-CN" className="relative flex h-screen min-w-0 flex-col overflow-hidden bg-[#e6e6e6] font-['Open_Sans','Noto_Sans_CJK_SC',sans-serif]">
      <header className="relative shrink-0 bg-[#217346]">
        <Decor />
        <TitleBar />
        <TabBar />
      </header>
      <Ribbon />
      <FormulaBar />
      <Sheet />
      <SheetTabs />
      <StatusBar />
      <ImeBar />
    </div>
  );
}
